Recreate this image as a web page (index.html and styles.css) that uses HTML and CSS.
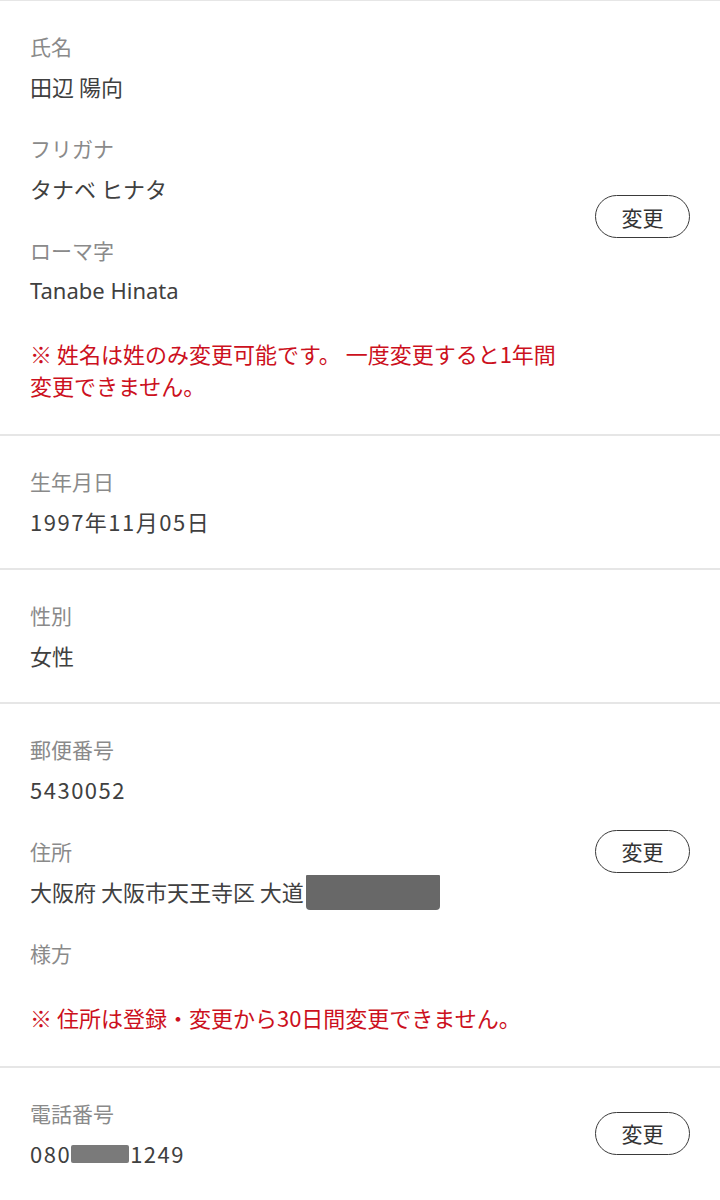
FILE: index.html
```html
<!DOCTYPE html>
<html lang="ja">
<head>
	<meta charset="UTF-8">
	<title>会員情報</title>
	<link rel="stylesheet" href="styles.css">
</head>
<body>
	<div class="profile">
		<!-- 氏名 -->
		<div class="pf_block">
			<div class="pf_row">
				<div class="pf_fields">
					<div class="pf_item">
						<div class="pf_label">氏名</div>
						<div class="pf_value">田辺 陽向</div>
					</div>
					<div class="pf_item">
						<div class="pf_label">フリガナ</div>
						<div class="pf_value">タナベ ヒナタ</div>
					</div>
					<div class="pf_item">
						<div class="pf_label">ローマ字</div>
						<div class="pf_value pf_latin">Tanabe Hinata</div>
					</div>
					<p class="pf_note">※ 姓名は姓のみ変更可能です。 一度変更すると1年間<br>変更できません。</p>
				</div>
				<button class="pf_btn" type="button">変更</button>
			</div>
		</div>
		<!-- 生年月日 -->
		<div class="pf_block">
			<div class="pf_item">
				<div class="pf_label">生年月日</div>
				<div class="pf_value pf_num">1997年11月05日</div>
			</div>
		</div>
		<!-- 性別 -->
		<div class="pf_block">
			<div class="pf_item">
				<div class="pf_label">性別</div>
				<div class="pf_value">女性</div>
			</div>
		</div>
		<!-- 住所 -->
		<div class="pf_block">
			<div class="pf_row">
				<div class="pf_fields">
					<div class="pf_item">
						<div class="pf_label">郵便番号</div>
						<div class="pf_value pf_num">5430052</div>
					</div>
					<div class="pf_item">
						<div class="pf_label">住所</div>
						<div class="pf_value">大阪府 大阪市天王寺区 大道<span class="pf_mask pf_mask_addr"></span></div>
					</div>
					<div class="pf_item">
						<div class="pf_label">様方</div>
					</div>
				</div>
				<button class="pf_btn" type="button">変更</button>
			</div>
			<p class="pf_note pf_note_addr">※ 住所は登録・変更から30日間変更できません。</p>
		</div>
		<!-- 電話番号 -->
		<div class="pf_block">
			<div class="pf_row">
				<div class="pf_fields">
					<div class="pf_item">
						<div class="pf_label">電話番号</div>
						<div class="pf_value pf_num pf_tel">080<span class="pf_mask pf_mask_tel"></span>1249</div>
					</div>
				</div>
				<button class="pf_btn" type="button">変更</button>
			</div>
		</div>
	</div>
</body>
</html>
```

FILE: styles.css
```css
body {
		margin:0;
		background:#fff;
		font-family:"Noto Sans CJK JP", "Noto Sans", sans-serif;
		color:#333;
	}
.profile {
		width:720px;
	}
.pf_block {
		padding:31px 30px 33px;
		border-top:2px solid #e6e6e6;
	}
.pf_block:first-child {
		border-top-width:1px;
	}
.pf_row {
		display:flex;
		align-items:center;
		justify-content:space-between;
	}
.pf_fields {
		display:flex;
		flex-direction:column;
		gap:34px;
	}
.pf_item {
		display:flex;
		flex-direction:column;
		gap:12px;
	}
.pf_label {
		height:28px;
		font-size:21px;
		line-height:28px;
		color:#8a8a8a;
	}
.pf_value {
		display:flex;
		align-items:center;
		height:28px;
		font-size:22px;
		line-height:28px;
		color:#404040;
	}
.pf_latin {
		font-family:"Noto Sans", "Noto Sans CJK JP", sans-serif;
		font-size:22px;
	}
.pf_num {
		letter-spacing:1.5px;
	}
.pf_mask {
		display:inline-block;
		background:#686868;
	}
.pf_mask_addr {
		width:134px;
		height:35px;
		margin-top:2px;
		margin-left:2px;
		border-radius:1px 1px 4px 4px;
	}
.pf_mask_tel {
		width:58px;
		height:18px;
		margin-top:2px;
		margin-right:1px;
		background:#7a7a7a;
		border-radius:2px;
	}
.pf_note {
		margin:-1px 0 0;
		font-size:22px;
		line-height:32px;
		color:#cc1020;
	}
.pf_note_addr {
		margin-top:34px;
	}
.pf_btn {
		flex-shrink:0;
		width:95px;
		height:43px;
		padding:0;
		border:1.5px solid #3a3a3a;
		border-radius:22px;
		background:#fff;
		font-family:inherit;
		font-size:21px;
		color:#333;
		cursor:pointer;
	}
```
